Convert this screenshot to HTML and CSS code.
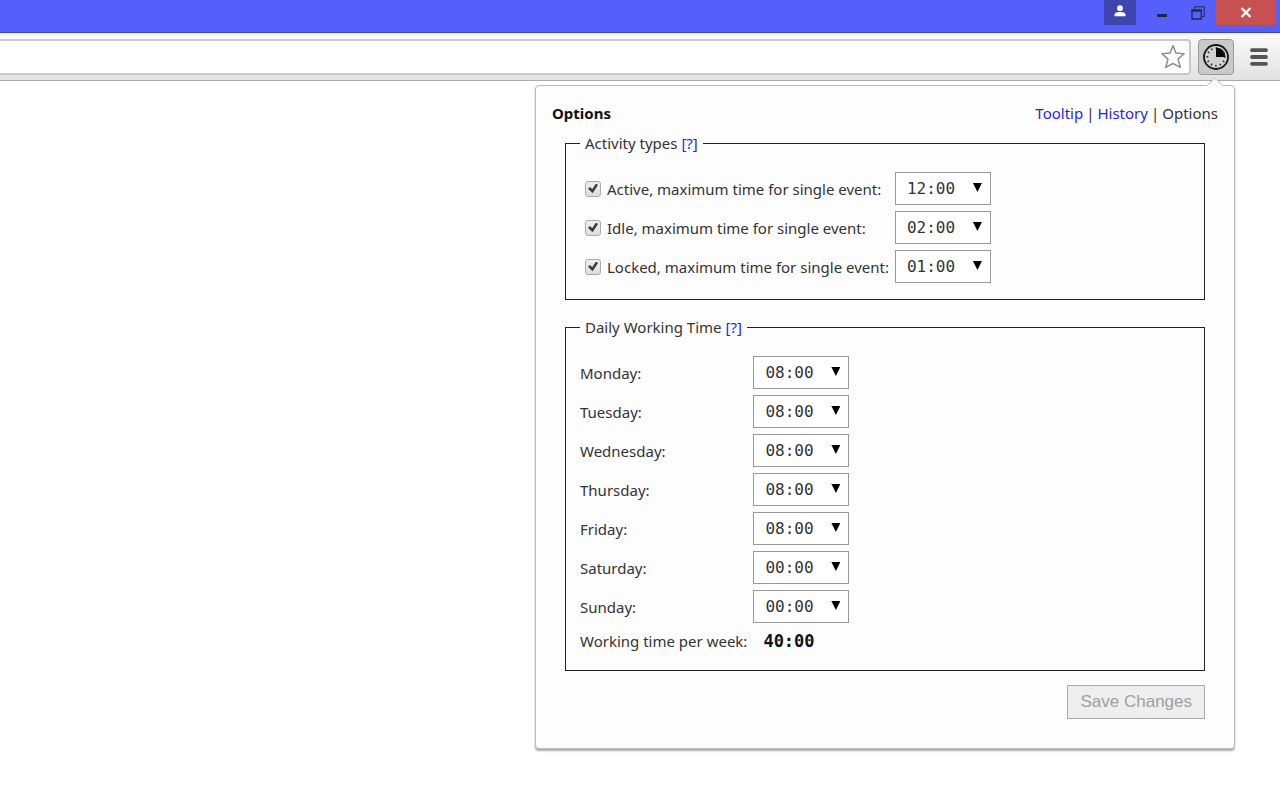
FILE: index.html
```html
<!DOCTYPE html>
<html lang="en">
<head>
<meta charset="utf-8">
<title>Options</title>
<link rel="stylesheet" href="styles.css">
</head>
<body>
<header class="browser">
  <div class="titlebar">
    <button class="win user" aria-label="User"><svg width="12" height="12" viewBox="0 0 12 12"><circle cx="6" cy="3.2" r="2.9" fill="#fff"/><path d="M.5 11.3V9.8C.5 7.6 3 7 6 7s5.500.6 5.500 2.800v1.500z" fill="#fff"/></svg></button>
    <button class="win minimize" aria-label="Minimize"><svg width="12" height="4" viewBox="0 0 12 4"><path d="M1 0h10v3H1z" fill="#24283c"/></svg></button>
    <button class="win restore" aria-label="Restore"><svg width="14" height="14" viewBox="0 0 14 14" fill="none" stroke="#24283c"><path d="M3.500 3V.8h9.700v9.700H11"/><path d="M1 4.500h9.300v8.500H1z" stroke-width="1.300"/><path d="M.5 4.500h10.300" stroke-width="2.200"/></svg></button>
    <button class="win close" aria-label="Close"><svg width="12" height="11" viewBox="0 0 12 11"><path d="M1.500 1l9 9M10.500 1l-9 9" stroke="#fff" stroke-width="2.300"/></svg></button>
  </div>
  <div class="toolbar">
    <div class="omnibox">
      <input class="address" type="text" aria-label="Address">
      <button class="star" aria-label="Bookmark"><svg width="26" height="25" viewBox="0 0 26 25"><path d="M13 1.600l2.900 7.400 8.200.7-6.100 5.400 2.300 8.200-7.300-3.800-7.300 3.800 2.300-8.200-6.100-5.400 8.200-.7z" fill="#fff" stroke="#8c8c8c" stroke-width="1.500" stroke-linejoin="round"/></svg></button>
    </div>
    <button class="extension" aria-label="Activity timer"><svg width="28" height="28" viewBox="0 0 28 28"><circle cx="14" cy="14" r="12" fill="#d3d3d3" stroke="#151515" stroke-width="1.800"/><circle cx="14" cy="14" r="8.700" fill="none" stroke="#222" stroke-width="2" stroke-dasharray="1.300 3.255" stroke-dashoffset=".65"/><path d="M14 4.500A9.500 9.500 0 0 1 23.500 14H14z" fill="#080808"/></svg></button>
    <button class="menu" aria-label="Menu"><svg width="18" height="18" viewBox="0 0 18 18"><path d="M2 2.200h14M2 9h14M2 15.800h14" stroke="#555" stroke-width="3.800" stroke-linecap="round"/></svg></button>
  </div>
</header>
<main class="popup">
  <svg class="pointer" width="18" height="9" viewBox="0 0 18 9"><path d="M0 9l2-1 7-7 7 7 2 1z" fill="#fdfdfd"/><path d="M0 8.500l2-.5 7-7 7 7 2 .5" fill="none" stroke="#c4c4c4"/></svg>
  <div class="heading">
    <h1 class="title">Options</h1>
    <nav class="links"><a href="#tooltip">Tooltip</a><span>|</span><a href="#history">History</a><span>|</span><span>Options</span></nav>
  </div>
  <form class="form">
    <fieldset class="group">
      <legend>Activity types <a href="#types-help">[?]</a></legend>
      <div class="rows types">
        <label class="check"><input type="checkbox" checked>Active, maximum time for single event:</label>
        <span class="pick"><select aria-label="Active maximum time"><option>12:00</option></select></span>
        <label class="check"><input type="checkbox" checked>Idle, maximum time for single event:</label>
        <span class="pick"><select aria-label="Idle maximum time"><option>02:00</option></select></span>
        <label class="check"><input type="checkbox" checked>Locked, maximum time for single event:</label>
        <span class="pick"><select aria-label="Locked maximum time"><option>01:00</option></select></span>
      </div>
    </fieldset>
    <fieldset class="group">
      <legend>Daily Working Time <a href="#time-help">[?]</a></legend>
      <div class="rows days">
        <label for="mon">Monday:</label><span class="pick"><select id="mon"><option>08:00</option></select></span>
        <label for="tue">Tuesday:</label><span class="pick"><select id="tue"><option>08:00</option></select></span>
        <label for="wed">Wednesday:</label><span class="pick"><select id="wed"><option>08:00</option></select></span>
        <label for="thu">Thursday:</label><span class="pick"><select id="thu"><option>08:00</option></select></span>
        <label for="fri">Friday:</label><span class="pick"><select id="fri"><option>08:00</option></select></span>
        <label for="sat">Saturday:</label><span class="pick"><select id="sat"><option>00:00</option></select></span>
        <label for="sun">Sunday:</label><span class="pick"><select id="sun"><option>00:00</option></select></span>
        <span>Working time per week:</span><output class="total">40:00</output>
      </div>
    </fieldset>
    <button class="save" type="button" disabled>Save Changes</button>
  </form>
</main>
</body>
</html>
```

FILE: styles.css
```css
* { box-sizing: border-box; }
body {
  min-height: 100vh;
  margin: 0;
  background: #fff;
  color: #333;
  font: 15px/20px "Noto Sans", "Open Sans", sans-serif;
}
button { padding: 0; border: 0; background: none; font: inherit; }
svg { display: block; }
a { color: #2a1fe8; text-decoration: none; }

.titlebar {
  display: flex;
  justify-content: flex-end;
  height: 33px;
  padding-right: 4px;
  background: #5560fc;
  border-bottom: 1px solid #3b42bd;
}
.win {
  display: flex;
  align-items: center;
  justify-content: center;
  height: 25px;
}
.user { width: 32px; padding-bottom: 3px; background: #3d45b0; }
.minimize { width: 34px; margin-left: 9px; padding-top: 6px; }
.restore { width: 37px; }
.close { width: 60px; background: #c75050; }

.toolbar {
  display: flex;
  align-items: center;
  height: 48px;
  padding-right: 12px;
  background: linear-gradient(#fbfbfb, #e2e2e2);
  border-bottom: 1px solid #aaa;
}
.omnibox {
  display: flex;
  flex: 1;
  align-items: center;
  height: 36px;
  padding-right: 3px;
  background: #fff;
  border: 2px solid #c8c8c8;
  border-left: 0;
  border-radius: 0 4px 4px 0;
}
.address { flex: 1; min-width: 0; height: 30px; border: 0; background: none; outline: 0; }
.extension {
  display: flex;
  align-items: center;
  justify-content: center;
  width: 36px;
  height: 36px;
  margin: 0 16px 0 7px;
  background: #c9c9c9;
  border: 1px solid #999;
  border-radius: 4px;
}

.popup {
  position: relative;
  width: 700px;
  max-width: 100%;
  margin: 4px 45px 0 auto;
  padding: 17px 16px 29px;
  background: #fdfdfd;
  border: 1px solid #bbb;
  border-radius: 4px;
  box-shadow: 0 2px 2px #aaa;
}
.pointer { position: absolute; top: -9px; right: 10px; }
.heading { display: flex; justify-content: space-between; }
.links { display: flex; gap: 3px; }
.title { margin: 0; color: #111; font-size: 15px; line-height: 20px; }
.form { display: flex; flex-direction: column; padding: 10px 13px 0; }
.group {
  min-width: 0;
  margin: 0 0 17px;
  padding: 19px 14px 16px;
  border: 1px solid #222;
}
.group:last-of-type { margin-bottom: 14px; padding-bottom: 17px; }
.group legend { padding: 0 5px; }
.rows {
  display: grid;
  grid-template-columns: max-content max-content;
  column-gap: 6px;
  row-gap: 6px;
  align-items: center;
}
.check { display: flex; align-items: center; gap: 6px; padding-left: 5px; }
.check input {
  appearance: none;
  width: 16px;
  height: 16px;
  margin: 0;
  border: 1px solid #aaa;
  border-radius: 3px;
  background: linear-gradient(#eee, #ddd);
  position: relative;
}
.check input::after {
  content: "";
  position: absolute;
  inset: 2px;
  background: #3c3c3c;
  clip-path: polygon(0 52%, 20% 36%, 42% 58%, 80% 0, 100% 14%, 46% 98%);
}
.pick { position: relative; }
.pick::after {
  content: "";
  position: absolute;
  top: 11px;
  right: 9px;
  width: 9px;
  height: 9px;
  background: #000;
  clip-path: polygon(0 0, 100% 0, 50% 100%);
  pointer-events: none;
}
.pick select {
  display: block;
  appearance: none;
  width: 96px;
  height: 33px;
  padding: 0 11px;
  border: 1px solid #999;
  border-radius: 0;
  background: #fff;
  color: #333;
  font: 16px "DejaVu Sans Mono", monospace;
}
.total { padding-left: 10px; color: #111; font: bold 17px/24px "DejaVu Sans Mono", monospace; }
.save {
  align-self: flex-end;
  height: 34px;
  padding: 0 12px;
  background: #eee;
  border: 1px solid #aaa;
  color: #a0a0a0;
  font: 17px "Liberation Sans", sans-serif;
}
```
